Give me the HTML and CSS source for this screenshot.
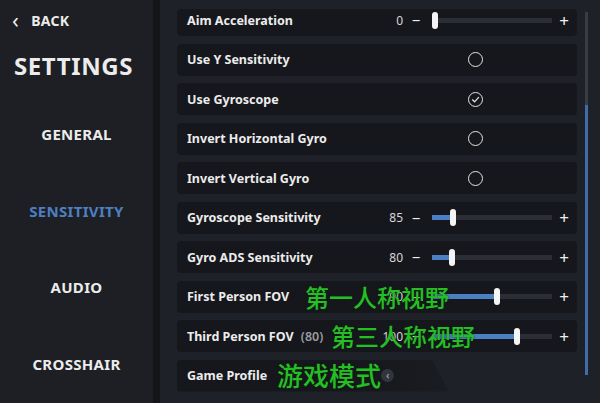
FILE: index.html
```html
<!DOCTYPE html>
<html lang="en">
<head>
    <meta charset="UTF-8">
    <meta name="viewport" content="width=device-width, initial-scale=1.0">
    <title>Settings</title>
    <link rel="stylesheet" href="styles.css">
</head>
<body>
    <aside class="sidebar">
        <div class="back"><span class="chev">&lsaquo;</span> BACK</div>
        <h1 class="title">SETTINGS</h1>
        <nav class="nav">
            <div class="nav-item">GENERAL</div>
            <div class="nav-item active">SENSITIVITY</div>
            <div class="nav-item">AUDIO</div>
            <div class="nav-item">CROSSHAIR</div>
        </nav>
    </aside>

    <main class="main">
        <div class="list">
            <div class="row">
                <span class="label">Aim Acceleration</span>
                <div class="control">
                    <span class="value">0</span>
                    <span class="step">&minus;</span>
                    <div class="track"><div class="fill" style="width: 0px"></div><div class="thumb" style="left: 0px"></div></div>
                    <span class="step">+</span>
                </div>
            </div>
            <div class="row">
                <span class="label">Use Y Sensitivity</span>
                <div class="toggle"><span class="radio"></span></div>
            </div>
            <div class="row">
                <span class="label">Use Gyroscope</span>
                <div class="toggle">
                    <span class="radio">
                        <svg width="9" height="9" viewBox="0 0 9 9"><path d="M1.5 4.8 L3.6 6.8 L7.6 2.4" fill="none" stroke="#e8e8e8" stroke-width="1.2" stroke-linecap="round" stroke-linejoin="round"/></svg>
                    </span>
                </div>
            </div>
            <div class="row">
                <span class="label">Invert Horizontal Gyro</span>
                <div class="toggle"><span class="radio"></span></div>
            </div>
            <div class="row">
                <span class="label">Invert Vertical Gyro</span>
                <div class="toggle"><span class="radio"></span></div>
            </div>
            <div class="row">
                <span class="label">Gyroscope Sensitivity</span>
                <div class="control">
                    <span class="value">85</span>
                    <span class="step">&minus;</span>
                    <div class="track"><div class="fill" style="width: 18px"></div><div class="thumb" style="left: 18px"></div></div>
                    <span class="step">+</span>
                </div>
            </div>
            <div class="row">
                <span class="label">Gyro ADS Sensitivity</span>
                <div class="control">
                    <span class="value">80</span>
                    <span class="step">&minus;</span>
                    <div class="track"><div class="fill" style="width: 17px"></div><div class="thumb" style="left: 17px"></div></div>
                    <span class="step">+</span>
                </div>
            </div>
            <div class="row">
                <span class="label">First Person FOV</span>
                <div class="control">
                    <span class="value">90</span>
                    <span class="step">&minus;</span>
                    <div class="track"><div class="fill" style="width: 62px"></div><div class="thumb" style="left: 62px"></div></div>
                    <span class="step">+</span>
                </div>
            </div>
            <div class="row">
                <span class="label">Third Person FOV <span class="hint">(80)</span></span>
                <div class="control">
                    <span class="value">100</span>
                    <span class="step">&minus;</span>
                    <div class="track"><div class="fill" style="width: 82px"></div><div class="thumb" style="left: 82px"></div></div>
                    <span class="step">+</span>
                </div>
            </div>
            <div class="row row-profile">
                <span class="label">Game Profile</span>
                <span class="pick">&lsaquo;</span>
            </div>
        </div>
        <div class="scrollbar"><div class="scroll-thumb"></div></div>

        <span class="caption cap-first">第一人称视野</span>
        <span class="caption cap-third">第三人称视野</span>
        <span class="caption cap-profile">游戏模式</span>
    </main>
</body>
</html>
```

FILE: styles.css
```css
body {
    margin: 0;
    width: 600px;
    height: 403px;
    overflow: hidden;
    display: flex;
    font-family: 'Noto Sans', 'Open Sans', sans-serif;
    background-color: #1f2129;
    color: #ececec;
}

.sidebar {
    width: 153px;
    flex-shrink: 0;
    background-color: #1d1f24;
    border-right: 7px solid #141519;
    display: flex;
    flex-direction: column;
}

.back {
    display: flex;
    align-items: center;
    height: 20px;
    margin-top: 10px;
    padding-left: 12px;
    font-size: 14px;
    font-weight: bold;
    letter-spacing: 0.3px;
}

.chev {
    font-size: 22px;
    font-weight: normal;
    margin-right: 12px;
    line-height: 20px;
    padding-bottom: 3px;
}

.title {
    margin: 20px 0 0 14px;
    font-size: 24px;
    line-height: 32px;
    font-weight: bold;
    letter-spacing: 0.6px;
}

.nav {
    display: flex;
    flex-direction: column;
}

.nav-item {
    height: 20px;
    line-height: 20px;
    margin-top: 56.5px;
    text-align: center;
    font-size: 15px;
    font-weight: bold;
    letter-spacing: 0.3px;
}

.nav-item:first-child {
    margin-top: 42px;
}

.nav-item.active {
    color: #4d7fc2;
}

.main {
    flex: 1;
    position: relative;
    display: flex;
    padding-left: 17px;
}

.list {
    width: 400px;
    display: flex;
    flex-direction: column;
    gap: 7.5px;
    padding-top: 4px;
}

.row {
    height: 32px;
    flex-shrink: 0;
    display: flex;
    align-items: center;
    padding: 0 1px 0 10px;
    background-color: #16171c;
    border-radius: 4px;
}

.row:first-child {
    clip-path: inset(5px 0 0 0 round 4px);
}

.label {
    flex: 1;
    font-size: 12.5px;
    font-weight: bold;
    color: #ececec;
}

.hint {
    margin-left: 4px;
    font-weight: 600;
    color: #9a9ba0;
}

.control {
    width: 197px;
    display: flex;
    align-items: center;
}

.value {
    width: 24px;
    text-align: right;
    font-size: 12px;
    color: #d8d8d8;
}

.step {
    width: 26px;
    text-align: center;
    font-size: 15px;
    color: #f0f0f0;
}

.step:last-child {
    width: 24px;
    font-size: 17px;
}

.track {
    position: relative;
    width: 120px;
    height: 5px;
    margin-left: 3px;
    background-color: #2c2e35;
}

.fill {
    height: 100%;
    background-color: #4a7fc4;
}

.thumb {
    position: absolute;
    top: -6px;
    width: 6px;
    height: 17px;
    border-radius: 3px;
    background-color: #f4f4f4;
}

.toggle {
    width: 197px;
    display: flex;
    padding-left: 89px;
    box-sizing: border-box;
}

.radio {
    width: 13px;
    height: 13px;
    border: 1.3px solid #e4e4e4;
    border-radius: 50%;
    display: flex;
    align-items: center;
    justify-content: center;
}

.row-profile {
    width: 260px;
    clip-path: polygon(0 0, 255px 0, 272px 100%, 0 100%);
    background: linear-gradient(90deg, #16171c 0, #16171c 60%, #1b1c22 100%);
}

.row-profile .label {
    flex: none;
}

.pick {
    margin-left: 114px;
    width: 13px;
    height: 13px;
    border-radius: 50%;
    background-color: #33353d;
    color: #b0b0b4;
    font-size: 11px;
    line-height: 12px;
    text-align: center;
}

.scrollbar {
    width: 3px;
    height: 363px;
    margin: 12px 0 0 8px;
    background-color: #3a3c44;
    position: relative;
}

.scroll-thumb {
    position: absolute;
    top: 93px;
    bottom: 0;
    width: 100%;
    background-color: #3f6cab;
    box-shadow: 0 14px 10px -4px rgba(70, 120, 190, 0.35);
}

.caption {
    position: absolute;
    font-family: 'Noto Sans CJK SC', sans-serif;
    font-size: 24px;
    line-height: 28px;
    font-weight: 500;
    color: #27bd27;
    text-shadow: 0 0 2px rgba(0, 40, 0, 0.8);
    white-space: nowrap;
}

.cap-first {
    left: 145px;
    top: 283px;
}

.cap-third {
    left: 171px;
    top: 322px;
}

.cap-profile {
    left: 117px;
    top: 361px;
    font-size: 26px;
}
```
